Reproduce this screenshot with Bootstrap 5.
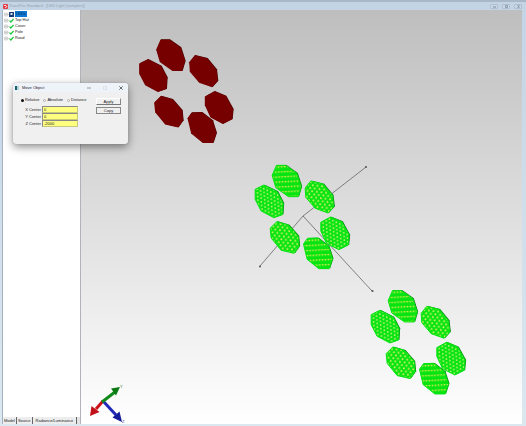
<!DOCTYPE html>
<html lang="en">
<head>
<meta charset="utf-8">
<meta name="viewport" content="width=device-width, initial-scale=1">
<title>LED light model</title>
<link href="https://cdn.jsdelivr.net/npm/bootstrap@5.3.0/dist/css/bootstrap.min.css" rel="stylesheet">
<style>
body { font: 4px/6px "Liberation Sans", Arial, sans-serif; color: #222; background: #c8d8e8; }
.app { padding: 0 4px 2px 2px; background: linear-gradient(#c3d4e5, #dbe8f0); }
.titlebar { height: 10px; padding-top: 2px; background: linear-gradient(#a9b7c9 0 2px, #c3d4e5 2px); color: #98a3b0; margin: 0 -4px 0 -2px; padding-left: 3px; padding-right: 4px; }
.titlebar svg { width: 5px; height: 5px; }
.app-title { font-size: 4px; padding-left: 1px; }
.winbtn { width: 8px; height: 5px; border: 1px solid #b3bfce; border-radius: 1px; background: #c9d7e6; padding: 0; line-height: 0; display: flex; align-items: center; justify-content: center; }
.winbtn svg { width: 5px; height: 3px; }
.side { width: 79px; background: #fff; border-right: 1px solid #b0b4b8; border-left: 1px solid #a4b2c2; }
.tree { padding: 1px 0 0 1px; margin: 0; }
.tree li { height: 6px; gap: 1px; }
.tree svg { width: 10px; height: 5px; flex: none; }
.picked { background: #0c78d4; color: #103050; padding: 0 1px; }
.tabs { background: #e4e4e4; height: 7px; }
.tabs button { border: 0; border-right: 1px solid #666; background: #ededed; color: #222; padding: 0 1px; line-height: 7px; white-space: nowrap; }
.tabs button:last-child { padding: 0 3px; }
.view { background: linear-gradient(#bebebe, #fff); min-width: 0; overflow: hidden; }
.view svg { position: absolute; left: 0; top: 0; width: 100%; height: 100%; }
.axis-name { font: 4px "Liberation Sans", Arial, sans-serif; }
.dialog-box { position: absolute; left: 13px; top: 83px; width: 115px; height: 61px; background: #f0f0f0; border-radius: 3px; box-shadow: 0 0 1px #777, 0 3px 9px rgba(0,0,0,.45); color: #222; }
.dialog-head { height: 9px; background: #eef2f9; border-radius: 3px 3px 0 0; padding: 0 5px 0 2px; gap: 3px; }
.dialog-head svg { width: 4px; height: 4px; display: block; }
.dialog-head button { border: 0; background: none; padding: 0; }
.dialog-head .acts { gap: 12px; }
.dialog-main { padding: 5px 7px 0 8px; }
.opts { gap: 4px; height: 6px; }
.opts label { gap: 1px; }
.opts input { appearance: none; width: 3px; height: 3px; margin: 0; border: 1px solid #aaa; border-radius: 50%; background: #fff; }
.opts input:checked { background: #111; border: 0; }
.coords { display: grid; grid-template-columns: 20px 36px; column-gap: 1px; row-gap: 0; padding-top: 3px; }
.coords label { text-align: right; line-height: 7px; white-space: nowrap; }
.coords input { width: 100%; height: 7px; border: 1px solid #c9c97a; border-top-color: #888; border-left-color: #888; background: #ffff80; padding: 0 1px; line-height: 5px; color: #222; border-radius: 0; }
.cmds { gap: 2px; width: 25px; padding-top: 1px; }
.cmds button { height: 7px; padding: 0; line-height: 5px; border: 1px solid #fff; border-right-color: #888; border-bottom-color: #777; background: #f0f0f0; color: #222; }
.cmds button:last-child { border-color: #888; }
</style>
<script src="https://cdn.jsdelivr.net/npm/bootstrap@5.3.0/dist/js/bootstrap.bundle.min.js"></script>
</head>
<body>
<svg width="0" height="0" class="position-absolute" aria-hidden="true">
  <defs>
    <g id="box"><path d="M.5 1h3v3h-3zM1 2.500h2M2 1.500v2M4 2.500h1" fill="none" stroke="#aaa" stroke-width=".5"/></g>
    <g id="tick"><path d="M.5 2.600 1.800 4 4.600.9" fill="none" stroke="#20c840" stroke-width="1.300"/></g>
  </defs>
</svg>
<div class="app d-flex flex-column vh-100">
  <header class="titlebar d-flex align-items-center flex-shrink-0">
    <svg viewBox="0 0 5 5"><rect width="5" height="5" rx="1" fill="#e23b45"/><path d="M1 1.500h2l1 1-2 1.500" fill="none" stroke="#fff" stroke-width=".8"/></svg>
    <span class="app-title">TracePro Standard - [LED Light (samples)]</span>
    <div class="ms-auto d-flex">
      <button class="winbtn me-1" aria-label="Minimize"><svg viewBox="0 0 5 3"><path d="M1 2h3" stroke="#7d8b9c"/></svg></button>
      <button class="winbtn me-1" aria-label="Restore"><svg viewBox="0 0 5 3"><path d="M1.500.5h2v2h-2z" fill="none" stroke="#7d8b9c" stroke-width=".8"/></svg></button>
      <button class="winbtn" aria-label="Close"><svg viewBox="0 0 5 3"><path d="M1.500 0l2 3M3.500 0l-2 3" stroke="#7d8b9c" stroke-width=".8"/></svg></button>
    </div>
  </header>
  <div class="d-flex flex-grow-1">
    <aside class="side d-flex flex-column flex-shrink-0">
      <ul class="tree list-unstyled flex-grow-1">
        <li class="d-flex align-items-center"><svg viewBox="0 0 10 5"><use href="#box"/><rect x="5" width="5" height="5" fill="#173a72"/><path d="M6.500 1h2v2h-2z" fill="#dbe6f5"/></svg><span class="picked">LEDs</span></li>
        <li class="d-flex align-items-center"><svg viewBox="0 0 10 5"><use href="#box"/><use href="#tick" x="5"/></svg><span>Top Hat</span></li>
        <li class="d-flex align-items-center"><svg viewBox="0 0 10 5"><use href="#box"/><use href="#tick" x="5"/></svg><span>Cover</span></li>
        <li class="d-flex align-items-center"><svg viewBox="0 0 10 5"><use href="#box"/><use href="#tick" x="5"/></svg><span>Pole</span></li>
        <li class="d-flex align-items-center"><svg viewBox="0 0 10 5"><use href="#box"/><use href="#tick" x="5"/></svg><span>Road</span></li>
      </ul>
      <div class="tabs d-flex"><button>Model</button><button>Source</button><button>Radiance/Luminance</button></div>
    </aside>
    <main class="view position-relative flex-grow-1">
      <svg viewBox="81 10 441 414" preserveAspectRatio="xMinYMin meet" role="img" aria-label="Three rings of LED panels">
        <defs>
          <pattern id="rows" width="9" height="15" patternUnits="userSpaceOnUse" patternTransform="rotate(-3)"><path d="M2 8h5" stroke="#e6e850" stroke-width="4"/></pattern>
          <pattern id="cols" width="20" height="11" patternUnits="userSpaceOnUse" patternTransform="rotate(-4)"><circle cx="5" cy="3" r="2.700" fill="#c4f070"/><circle cx="15" cy="8" r="2.700" fill="#c4f070"/></pattern>
          <pattern id="dots" width="14" height="18" patternUnits="userSpaceOnUse" patternTransform="rotate(6)"><circle cx="4" cy="4" r="2.900" fill="#d8f060"/><circle cx="11" cy="13" r="2.900" fill="#d8f060"/></pattern>
          <path id="pa" d="M90 28h27l34 24 13 40-9 30h-29L88 95 77 58z"/>
          <path id="pb" d="M26 100 52 87l40 20 18 35-2 34-26 9-38-20-18-35z"/>
          <path id="pc" d="M176 96l17-21 37 9 28 34 4 34-17 19-39-14-28-33z"/>
          <path id="pd" d="M223 199l29-16 34 14 22 40-3 30-28 14-37-19-17-37z"/>
          <path id="pe" d="M171 264l12-17 31-1 32 25 12 37-10 30h-31l-35-28z"/>
          <path id="pf" d="M71 217l20-20 35 10 29 33 3 31-15 21-39-9-30-37z"/>
          <g id="ring"><use href="#pa"/><use href="#pb"/><use href="#pc"/><use href="#pd"/><use href="#pe"/><use href="#pf"/></g>
          <g id="lit">
            <use href="#ring" x="3" y="-1" fill="#067a0c"/>
            <use href="#ring" fill="#06e412"/>
            <use href="#pa" fill="url(#rows)"/><use href="#pe" fill="url(#rows)"/><use href="#pb" fill="url(#cols)"/><use href="#pd" fill="url(#cols)"/><use href="#pc" fill="url(#dots)"/><use href="#pf" fill="url(#dots)"/>
            <use href="#ring" fill="none" stroke="#06e412" stroke-width="3"/>
          </g>
        </defs>
        <use href="#ring" transform="translate(131 30) scale(.3333)" fill="#480000"/>
        <use href="#ring" transform="translate(130.500 30.300) scale(.3333)" fill="#760000"/>
        <path d="M260 266 303 216 366 167M303 216l69 75" fill="none" stroke="#666" stroke-width=".8"/>
        <g fill="#555"><circle cx="260" cy="266.500" r="1"/><circle cx="366" cy="167" r="1"/><circle cx="372.500" cy="291" r="1.100"/></g>
        <use href="#lit" transform="translate(246.500 156) scale(.3333)"/>
        <use href="#lit" transform="translate(362.500 281.300) scale(.3333)"/>
        <g stroke-width="3">
          <path d="M103 401l-7 8" stroke="#d01018"/><path d="M90 416l1.500-10 8 6z" fill="#c01018"/>
          <path d="M103 401l13 14" stroke="#2028b8"/><path d="M122 422l-9.500-4.500 7-6z" fill="#141c9c"/>
          <path d="M102 402l13-10" stroke="#118a1c"/><path d="M120 387l-9 1.500 5 7z" fill="#0a7a14"/>
        </g>
        <text class="axis-name" x="120" y="388" fill="#2a7a38">Y</text>
        <text class="axis-name" x="122" y="423" fill="#3038a0">Z</text>
      </svg>
    </main>
  </div>
</div>
<section class="dialog-box" role="dialog" aria-label="Move Object">
  <div class="dialog-head d-flex align-items-center">
    <svg viewBox="0 0 4 4"><path d="M0 0h4v4H0z" fill="#b9d4d6"/><path d="M0 0h2v4H0z" fill="#18606c"/></svg>
    <span>Move Object</span>
    <div class="acts ms-auto d-flex">
      <button aria-label="Minimize"><svg viewBox="0 0 4 4"><path d="M0 2h4" stroke="#777" stroke-width=".7"/></svg></button>
      <button aria-label="Maximize" disabled><svg viewBox="0 0 4 4"><path d="M.5.500h3v3h-3z" fill="none" stroke="#ccd" stroke-width=".5"/></svg></button>
      <button aria-label="Close"><svg viewBox="0 0 4 4"><path d="M.3.300l3.400 3.400M3.700.300.300 3.700" stroke="#333" stroke-width=".7"/></svg></button>
    </div>
  </div>
  <div class="dialog-main d-flex justify-content-between">
    <form>
      <div class="opts d-flex">
        <label class="d-flex align-items-center"><input type="radio" name="mode" checked>Relative</label>
        <label class="d-flex align-items-center"><input type="radio" name="mode">Absolute</label>
        <label class="d-flex align-items-center"><input type="radio" name="mode">Distance</label>
      </div>
      <div class="coords">
        <label for="cx">X Center</label><input id="cx" value="0">
        <label for="cy">Y Center</label><input id="cy" value="0">
        <label for="cz">Z Center</label><input id="cz" value="-2000">
      </div>
    </form>
    <div class="cmds d-flex flex-column"><button>Apply</button><button>Copy</button></div>
  </div>
</section>
</body>
</html>
